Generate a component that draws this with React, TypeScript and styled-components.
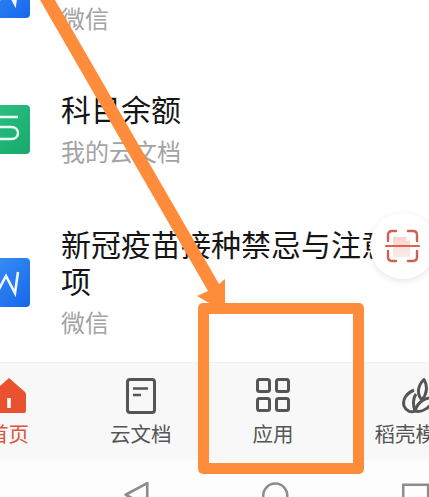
import React from "react";
import styled, { createGlobalStyle } from "styled-components";

const GlobalStyle = createGlobalStyle`
  html, body {
    margin: 0;
    padding: 0;
    background: #fff;
  }
`;

const Screen = styled.div`
  position: relative;
  width: 429px;
  height: 497px;
  overflow: hidden;
  background: #fff;
  font-family: "Noto Sans CJK SC", "Liberation Sans", sans-serif;
`;

const FileList = styled.div`
  display: flex;
  flex-direction: column;
  height: 431px;
  margin-top: -69px;
  margin-left: -18px;
`;

const FileRow = styled.div<{ $height: number }>`
  display: flex;
  align-items: center;
  gap: 31px;
  height: ${(p) => p.$height}px;
  flex: none;
`;

const FileIcon = styled.div<{ $kind: "blue" | "green" }>`
  flex: none;
  width: 48px;
  height: 49px;
  border-radius: 4px;
  display: flex;
  align-items: center;
  justify-content: flex-end;
  background: ${(p) =>
    p.$kind === "blue"
      ? "linear-gradient(135deg, #3d93f5, #1668ec)"
      : "linear-gradient(135deg, #2dc486, #17a96c)"};
`;

const FileText = styled.div`
  width: 362px;
  flex: none;
`;

const FileTitle = styled.div`
  font-size: 30px;
  line-height: 37px;
  color: #151515;
`;

const FileSource = styled.div<{ $offset?: number }>`
  margin-top: ${(p) => p.$offset ?? 5}px;
  font-size: 24px;
  line-height: 36px;
  color: #a3a3a3;
`;

const ScanButton = styled.div`
  position: absolute;
  left: 370px;
  top: 213px;
  width: 66px;
  height: 66px;
  border-radius: 50%;
  background: #fff;
  box-shadow: 0 2px 7px rgba(0, 0, 0, 0.1);
  display: flex;
  align-items: center;
  justify-content: flex-start;
  padding-left: 15px;
  box-sizing: border-box;
`;

const TabBar = styled.div`
  display: flex;
  gap: 81px;
  height: 98px;
  margin-left: -12px;
  background: #f8f8f8;
  border-top: 1px solid #f1f1f1;
  box-sizing: border-box;
`;

const Tab = styled.div<{ $active?: boolean }>`
  flex: none;
  display: flex;
  flex-direction: column;
  align-items: center;
  padding-top: 15px;
  box-sizing: border-box;
  color: ${(p) => (p.$active ? "#d9553f" : "#555")};
`;

const TabGlyph = styled.div`
  height: 36px;
  display: flex;
  align-items: flex-start;
  justify-content: center;
`;

const TabLabel = styled.div`
  margin-top: 4px;
  font-size: 20.5px;
  line-height: 30px;
  white-space: nowrap;
`;

const SystemBar = styled.div`
  display: flex;
  height: 37px;
  background: #fdfdfd;
  padding-top: 20px;
  padding-left: 124px;
  gap: 113.5px;
  box-sizing: border-box;
`;

const Callout = styled.div`
  position: absolute;
  left: 198px;
  top: 303px;
  width: 166px;
  height: 171px;
  border: 11px solid #ff8c3b;
  border-radius: 5px;
  box-sizing: border-box;
`;

const ArrowLayer = styled.svg`
  position: absolute;
  left: 0;
  top: 0;
`;

const BlueGlyph = () => (
  <svg width="30" height="30" viewBox="0 0 30 30" fill="none">
    <path d="M-2 23 L6 8 L15 25 L18 4" stroke="#fff" strokeWidth="2.6" opacity="0.92" />
  </svg>
);

const GreenGlyph = () => (
  <svg width="30" height="30" viewBox="0 0 30 30" fill="none">
    <path
      d="M0 2 H18 M0 12 H11 C16 12 18 15 18 18 C18 21 16 24 11 24 H0"
      stroke="#fff"
      strokeWidth="2.4"
      opacity="0.92"
    />
  </svg>
);

const ScanIcon = () => (
  <svg width="35" height="34" viewBox="0 0 35 34" fill="none">
    <defs>
      <linearGradient id="scanPage" x1="0" y1="0" x2="0" y2="1">
        <stop offset="0" stopColor="#f8d3ce" />
        <stop offset="1" stopColor="#fcecea" />
      </linearGradient>
    </defs>
    <path d="M8 8 H21 L25 12 V28 H8 Z" fill="url(#scanPage)" />
    <path d="M21 8 L25 12 H21 Z" fill="#fdf0ee" />
    <path
      d="M3 12 V6 Q3 2 7 2 H11 M23 2 H28 Q32 2 32 6 V12 M3 22 V28 Q3 32 7 32 H11 M23 32 H28 Q32 32 32 28 V22"
      stroke="#cf6052"
      strokeWidth="2.4"
      strokeLinecap="round"
    />
    <path d="M1 17 H34" stroke="#e5604f" strokeWidth="2.2" strokeLinecap="round" />
  </svg>
);

const HomeIcon = () => (
  <svg width="36" height="35" viewBox="0 0 36 35" fill="none">
    <path
      d="M18 0 L34 14 Q35 15 35 17 V33 Q35 35 33 35 H3 Q1 35 1 33 V17 Q1 15 2 14 Z"
      fill="#e9512f"
    />
    <rect x="16.2" y="20" width="3.6" height="10" fill="#fff" />
  </svg>
);

const DocIcon = () => (
  <svg width="30" height="36" viewBox="0 0 30 36" fill="none" stroke="#555">
    <rect x="1.5" y="1.5" width="27" height="33" rx="2.5" strokeWidth="3" />
    <path d="M7 10.5 H22 M7 17 H15" strokeWidth="2.6" />
  </svg>
);

const GridIcon = () => (
  <svg width="34" height="34" viewBox="0 0 34 34" fill="none" stroke="#555" strokeWidth="3">
    <rect x="1.5" y="1.5" width="12" height="12" rx="2" />
    <rect x="20.5" y="1.5" width="12" height="12" rx="2" />
    <rect x="1.5" y="20.5" width="12" height="12" rx="2" />
    <rect x="20.5" y="20.5" width="12" height="12" rx="2" />
  </svg>
);

const LeafIcon = () => (
  <svg width="36" height="36" viewBox="0 0 36 36" fill="none" stroke="#555" strokeWidth="3" strokeLinejoin="round">
    <path d="M26 1.5 C30 8 29 16 24 22 C19 17 19 8 26 1.5 Z" />
    <path d="M16 12 C9 15 4 21 6 28 C8 33 13 35 17 33 C15 27 15 20 18 16" />
    <path d="M17 33 C25 35 33 29 36 20 C28 19 20 23 17 33 Z" />
  </svg>
);

const BackKey = () => (
  <svg width="30" height="17" viewBox="0 0 30 17" fill="none">
    <path d="M28 2 V30 L2 16 Z" stroke="#8c8c8c" strokeWidth="3.2" strokeLinejoin="round" />
  </svg>
);

const HomeKey = () => (
  <svg width="32" height="17" viewBox="0 0 32 17" fill="none">
    <circle cx="16" cy="17" r="14.5" stroke="#8c8c8c" strokeWidth="3" />
  </svg>
);

const RecentKey = () => (
  <svg width="32" height="17" viewBox="0 0 32 17" fill="none">
    <rect x="1.5" y="4" width="30" height="30" stroke="#8c8c8c" strokeWidth="3" />
  </svg>
);

const tabs = [
  { label: "首页", icon: <HomeIcon />, active: true },
  { label: "云文档", icon: <DocIcon /> },
  { label: "应用", icon: <GridIcon /> },
  { label: "稻壳模板", icon: <LeafIcon /> },
];

export default function App() {
  return (
    <Screen>
      <GlobalStyle />
      <FileList>
        <FileRow $height={125}>
          <FileIcon $kind="blue">
            <BlueGlyph />
          </FileIcon>
          <FileText>
            <FileSource $offset={49}>微信</FileSource>
          </FileText>
        </FileRow>
        <FileRow $height={147}>
          <FileIcon $kind="green">
            <GreenGlyph />
          </FileIcon>
          <FileText>
            <FileTitle>科目余额</FileTitle>
            <FileSource $offset={6}>我的云文档</FileSource>
          </FileText>
        </FileRow>
        <FileRow $height={159}>
          <FileIcon $kind="blue">
            <BlueGlyph />
          </FileIcon>
          <FileText>
            <FileTitle>新冠疫苗接种禁忌与注意事项</FileTitle>
            <FileSource>微信</FileSource>
          </FileText>
        </FileRow>
      </FileList>
      <TabBar>
        {tabs.map((tab) => (
          <Tab key={tab.label} $active={tab.active}>
            <TabGlyph>{tab.icon}</TabGlyph>
            <TabLabel>{tab.label}</TabLabel>
          </Tab>
        ))}
      </TabBar>
      <SystemBar>
        <BackKey />
        <HomeKey />
        <RecentKey />
      </SystemBar>
      <ScanButton>
        <ScanIcon />
      </ScanButton>
      <ArrowLayer width="429" height="497" viewBox="0 0 429 497">
        <path d="M40 0 H55 L219 284 L225 279 V312 L197 296 L208 291 Z" fill="#ff8c3b" />
      </ArrowLayer>
      <Callout />
    </Screen>
  );
}
